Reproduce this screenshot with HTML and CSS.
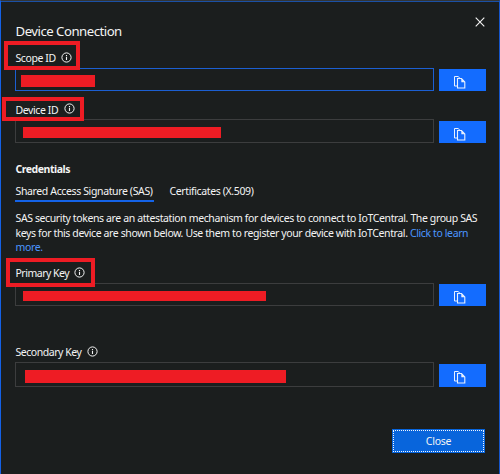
FILE: index.html
```
<!DOCTYPE html>
<html lang="en">
<head>
<meta charset="utf-8">
<title>Device Connection</title>
<link rel="stylesheet" href="styles.css">
</head>
<body>
<svg width="0" height="0" class="defs">
  <symbol id="info" viewBox="0 0 11 11"><circle cx="5.5" cy="5.5" r="4.6" fill="none" stroke="currentColor"/><path d="M5.5 4.8v3.2M5.5 2.9v1.1" stroke="currentColor" stroke-width="1.1"/></symbol>
  <symbol id="copy" viewBox="0 0 12 13"><path d="M3 10H.5V.5h3.6L6 2.4" fill="none" stroke="currentColor"/><path d="M3.5 2.5h4l3.3 3.5v6H3.5z" fill="none" stroke="currentColor" stroke-width="1.1"/><path d="M7.3 2.5v3.8h3.5z" fill="currentColor"/></symbol>
</svg>
<main class="dialog">
  <header class="header">
    <h1 class="title"><span>Device Connection</span></h1>
    <button class="dismiss" aria-label="Close dialog"><svg width="10" height="10" viewBox="0 0 10 10"><path d="M.7.7l8.6 8.6M9.3.7L.7 9.3" stroke="currentColor" stroke-width="1.1"/></svg></button>
  </header>

  <section class="field scope">
    <div class="label"><span class="name">Scope ID</span><svg class="info"><use href="#info"/></svg></div>
    <div class="row"><div class="input"><i class="redacted"></i></div><button class="copy" aria-label="Copy"><svg><use href="#copy"/></svg></button></div>
    <div class="mark"></div>
  </section>

  <section class="field device">
    <div class="label"><span class="name">Device ID</span><svg class="info"><use href="#info"/></svg></div>
    <div class="row"><div class="input"><i class="redacted"></i></div><button class="copy" aria-label="Copy"><svg><use href="#copy"/></svg></button></div>
    <div class="mark"></div>
  </section>

  <h2 class="subtitle"><span>Credentials</span></h2>
  <nav class="tabs">
    <a class="tab sas active"><span>Shared Access Signature (SAS)</span></a>
    <a class="tab x509"><span>Certificates (X.509)</span></a>
  </nav>
  <p class="text"><span class="l1">SAS security tokens are an attestation mechanism for devices to connect to IoTCentral. The group SAS</span><br><span class="l2">keys for this device are shown below. Use them to register your device with IoTCentral. <a class="link">Click to learn</a></span><br><a class="link">more.</a></p>

  <section class="field primary">
    <div class="label"><span class="name">Primary Key</span><svg class="info"><use href="#info"/></svg></div>
    <div class="row"><div class="input"><i class="redacted"></i></div><button class="copy" aria-label="Copy"><svg><use href="#copy"/></svg></button></div>
    <div class="mark"></div>
  </section>

  <section class="field secondary">
    <div class="label"><span class="name">Secondary Key</span><svg class="info"><use href="#info"/></svg></div>
    <div class="row"><div class="input"><i class="redacted"></i></div><button class="copy" aria-label="Copy"><svg><use href="#copy"/></svg></button></div>
  </section>

  <footer class="footer"><button class="close">Close</button></footer>
</main>
</body>
</html>
```
FILE: styles.css
```
* { box-sizing: border-box; }
body {
  margin: 0;
  height: 474px;
  overflow: hidden;
  background: #1b1e1e;
  color: #f4f4f4;
  font: 10.5px/20px "Noto Sans", "Open Sans", sans-serif;
  letter-spacing: -0.37px;
}
button { padding: 0; border: 0; color: inherit; font: inherit; letter-spacing: inherit; }
.defs { position: absolute; }
.dialog {
  height: 474px;
  padding: 0 13px 0 14px;
  border: 1px solid #1554c8;
  border-top-color: #333536;
  border-left-color: #1461e6;
  border-bottom: 0;
  box-shadow: inset 0 1px #1b50a5;
}
.header { display: flex; justify-content: space-between; height: 47px; padding-top: 16px; }
.title { margin: 3px 0 0; padding-left: 0.5px; font-size: 13.2px; font-weight: 400; line-height: 22px; letter-spacing: -0.5px; }
.dismiss { width: 10px; height: 10px; margin-right: 1px; background: none; }
.dismiss svg { display: block; }
.field { position: relative; }
.label { display: flex; align-items: center; height: 20px; white-space: nowrap; letter-spacing: -0.4px; }
.name { padding-left: 0.5px; }
.info { width: 11px; height: 11px; flex: none; margin-bottom: 1px; }
.row { display: flex; gap: 5px; height: 23px; }
.input { width: 419px; border: 1px solid #3c3d3e; }
.redacted { display: block; background: #ee1c24; }
.copy { display: flex; width: 47px; margin-top: 1px; padding: 7px 0 0 15px; background: #136cff; color: #e9f1ff; }
.copy svg { width: 12px; height: 13px; }
.mark { position: absolute; border: 4px solid #ee1c24; }

.scope .name { width: 46px; }
.scope .input { border-color: #1c5fd2; }
.scope .redacted { width: 74px; height: 12px; margin: 6px 0 0 5px; }
.scope .mark { left: -11px; top: -7px; width: 76px; height: 29px; }
.device { margin-top: 8px; }
.device .name { width: 48.5px; padding-top: 1px; }
.device .row { height: 24px; }
.device .redacted { width: 198px; height: 11px; margin: 7px 0 0 7px; }
.device .mark { left: -13px; top: -2px; width: 82px; height: 24px; }
.device .copy { margin-top: 2px; }

.subtitle { height: 20px; margin: 16px 0 3px; padding-left: 0.5px; font-size: 10.5px; font-weight: 700; line-height: 20px; letter-spacing: -0.46px; }
.tabs { display: flex; gap: 15px; height: 20px; line-height: 18px; white-space: nowrap; }
.tab { height: 20px; padding-left: 0.5px; }
.sas { width: 139px; }
.active { border-bottom: 2px solid #1463e8; }
.text { height: 44px; margin: 9px 0 8px; padding-left: 0.5px; line-height: 14.67px; white-space: nowrap; letter-spacing: -0.385px; }
.link { color: #4b96ff; }

.primary .name { width: 59px; letter-spacing: -0.49px; }
.primary .redacted { width: 243px; height: 10px; margin: 7px 0 0 7px; }
.primary .mark { left: -9px; top: -5px; width: 89px; height: 29px; }
.secondary { margin-top: 36px; }
.secondary .name { width: 72px; letter-spacing: -0.46px; }
.secondary .row { height: 25px; }
.secondary .redacted { width: 261px; height: 13px; margin: 7px 0 0 9px; }
.secondary .copy { margin-top: 2px; }

.footer { display: flex; justify-content: flex-end; margin-top: 42px; padding-right: 1px; }
.close { width: 93px; height: 24px; outline: 1px dotted #f0f6ff; outline-offset: -2px; background: #0865dc; letter-spacing: -0.25px; }
```
